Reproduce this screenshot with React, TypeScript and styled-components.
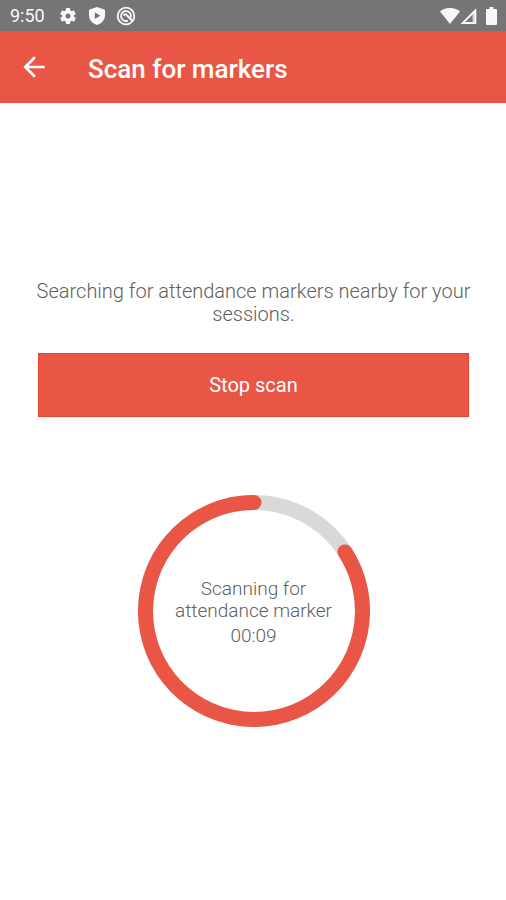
import React from "react";
import styled, { createGlobalStyle } from "styled-components";

const GlobalStyle = createGlobalStyle`
  *, *::before, *::after { box-sizing: border-box; }
  body {
    margin: 0;
    background: #ffffff;
    font-family: Roboto, "Liberation Sans", sans-serif;
  }
`;

const Screen = styled.div`
  display: flex;
  flex-direction: column;
  min-height: 100vh;
`;

const StatusBar = styled.div`
  display: flex;
  justify-content: space-between;
  align-items: center;
  height: 31px;
  padding: 1px 9px 0 10px;
  background: #757575;
  color: #f8f8f8;
`;

const StatusGroup = styled.div<{ $gap: number }>`
  display: flex;
  align-items: center;
  gap: ${({ $gap }) => $gap}px;

  svg { display: block; }
`;

const Clock = styled.time`
  margin-right: 4px;
  font-size: 18px;
  line-height: 24px;
`;

const AppBar = styled.header`
  display: flex;
  align-items: center;
  gap: 38px;
  height: 72px;
  padding: 0 18px;
  background: #e95646;
  color: #ffffff;
`;

const BackButton = styled.button`
  display: flex;
  padding: 0;
  border: 0;
  background: none;
  color: inherit;
  cursor: pointer;
`;

const Title = styled.h1`
  margin: 0;
  padding-top: 4px;
  font-size: 26px;
  font-weight: 500;
  line-height: 32px;
`;

const Content = styled.main`
  display: flex;
  flex-direction: column;
  align-items: center;
  padding: 177px 33px 32px 34px;
`;

const Message = styled.p`
  margin: 0;
  color: #606060;
  font-size: 20px;
  font-weight: 300;
  line-height: 23px;
  text-align: center;
`;

const StopButton = styled.button`
  align-self: stretch;
  height: 64px;
  margin: 27px 4px 78px;
  border: 1px solid #e5432a;
  background: #e95646;
  color: #ffffff;
  font-family: inherit;
  font-size: 20px;
  cursor: pointer;
`;

const Timer = styled.div`
  display: grid;
  place-items: center;

  > * { grid-area: 1 / 1; }
`;

const Ring = styled.svg`
  display: block;
  width: 232px;
  height: 232px;
`;

const TimerText = styled.div`
  display: flex;
  flex-direction: column;
  align-items: center;
  gap: 3px;
  max-width: 176px;
  padding-top: 3px;
  color: #606060;
  font-size: 19px;
  font-weight: 300;
  line-height: 22px;
  text-align: center;
`;

const CIRCUMFERENCE = 360;
const GAP_DEGREES = 57;

const GearIcon = () => (
  <svg width="20" height="20" viewBox="0 0 24 24" fill="currentColor" aria-hidden="true">
    <path d="M19.14 12.94c.04-.3.06-.61.06-.94s-.02-.64-.07-.94l2.03-1.58a.49.49 0 0 0 .12-.61l-1.92-3.32a.49.49 0 0 0-.59-.22l-2.39.96a7 7 0 0 0-1.62-.94l-.36-2.54a.48.48 0 0 0-.48-.41h-3.84a.48.48 0 0 0-.47.41l-.36 2.54c-.59.24-1.13.57-1.62.94l-2.39-.96a.48.48 0 0 0-.59.22L2.74 8.87a.48.48 0 0 0 .12.61l2.03 1.58a6 6 0 0 0 0 1.88l-2.03 1.58a.49.49 0 0 0-.12.61l1.92 3.32c.12.22.37.29.59.22l2.39-.96c.5.38 1.03.7 1.62.94l.36 2.54c.05.24.24.41.48.41h3.84c.24 0 .44-.17.47-.41l.36-2.54a7 7 0 0 0 1.62-.94l2.39.96c.22.08.47 0 .59-.22l1.92-3.32a.48.48 0 0 0-.12-.61zM12 15a3 3 0 1 1 0-6 3 3 0 0 1 0 6z" />
  </svg>
);

const ShieldIcon = () => (
  <svg width="20" height="20" viewBox="0 0 20 20" aria-hidden="true">
    <path fill="currentColor" d="M10 1l8 2.700v5.800c0 4.400-3.200 7.800-8 9.600-4.800-1.800-8-5.200-8-9.600V3.700z" />
    <path fill="#757575" d="M7.800 6.300l5.500 3.400-5.500 3.400z" />
  </svg>
);

const RadarIcon = () => (
  <svg width="20" height="20" viewBox="0 0 20 20" fill="none" stroke="currentColor" strokeWidth="1.800" aria-hidden="true">
    <circle cx="10" cy="10" r="8.300" />
    <path d="M12 14.600A5 5 0 1 1 14.700 11.700" />
    <path d="M7.500 9.500c1-2 3-1.500 3.800.3l5.500 5.500" strokeWidth="2" />
  </svg>
);

const WifiIcon = () => (
  <svg width="20" height="16" viewBox="0 0 20 16" fill="currentColor" aria-hidden="true">
    <path d="M0 3.500C5.500-1.200 14.500-1.200 20 3.500L10 16z" />
  </svg>
);

const SignalIcon = () => (
  <svg width="17" height="16" viewBox="0 0 17 16" aria-hidden="true">
    <path d="M2.800 15L15.300 2.500V15z" fill="none" stroke="currentColor" strokeWidth="1.800" />
    <path d="M12.500 5L16.200 1v15h-3.700z" fill="currentColor" opacity="0.700" />
  </svg>
);

const BatteryIcon = () => (
  <svg width="11" height="18" viewBox="0 0 11 18" fill="currentColor" aria-hidden="true">
    <path d="M3.500 0h4v2H10a1 1 0 0 1 1 1v14a1 1 0 0 1-1 1H1a1 1 0 0 1-1-1V3a1 1 0 0 1 1-1h2.500z" />
  </svg>
);

const BackIcon = () => (
  <svg width="32" height="32" viewBox="0 0 24 24" fill="currentColor" aria-hidden="true">
    <path d="M20 11H7.830l5.590-5.590L12 4l-8 8 8 8 1.410-1.410L7.830 13H20z" />
  </svg>
);

export default function App() {
  return (
    <>
      <GlobalStyle />
      <Screen>
        <StatusBar>
          <StatusGroup $gap={9}>
            <Clock>9:50</Clock>
            <GearIcon />
            <ShieldIcon />
            <RadarIcon />
          </StatusGroup>
          <StatusGroup $gap={9}>
            <StatusGroup $gap={0}>
              <WifiIcon />
              <SignalIcon />
            </StatusGroup>
            <BatteryIcon />
          </StatusGroup>
        </StatusBar>
        <AppBar>
          <BackButton type="button" aria-label="Back">
            <BackIcon />
          </BackButton>
          <Title>Scan for markers</Title>
        </AppBar>
        <Content>
          <Message>Searching for attendance markers nearby for your sessions.</Message>
          <StopButton type="button">Stop scan</StopButton>
          <Timer>
            <Ring viewBox="0 0 232 232" fill="none" strokeWidth="15" aria-hidden="true">
              <circle cx="116" cy="116" r="108.500" stroke="#d9d9d9" />
              <circle
                cx="116"
                cy="116"
                r="108.500"
                stroke="#e95646"
                strokeLinecap="round"
                pathLength={CIRCUMFERENCE}
                strokeDasharray={`${CIRCUMFERENCE - GAP_DEGREES} ${GAP_DEGREES}`}
                transform={`rotate(${GAP_DEGREES - 90} 116 116)`}
              />
            </Ring>
            <TimerText role="timer">
              <span>Scanning for attendance marker</span>
              <span>00:09</span>
            </TimerText>
          </Timer>
        </Content>
      </Screen>
    </>
  );
}
